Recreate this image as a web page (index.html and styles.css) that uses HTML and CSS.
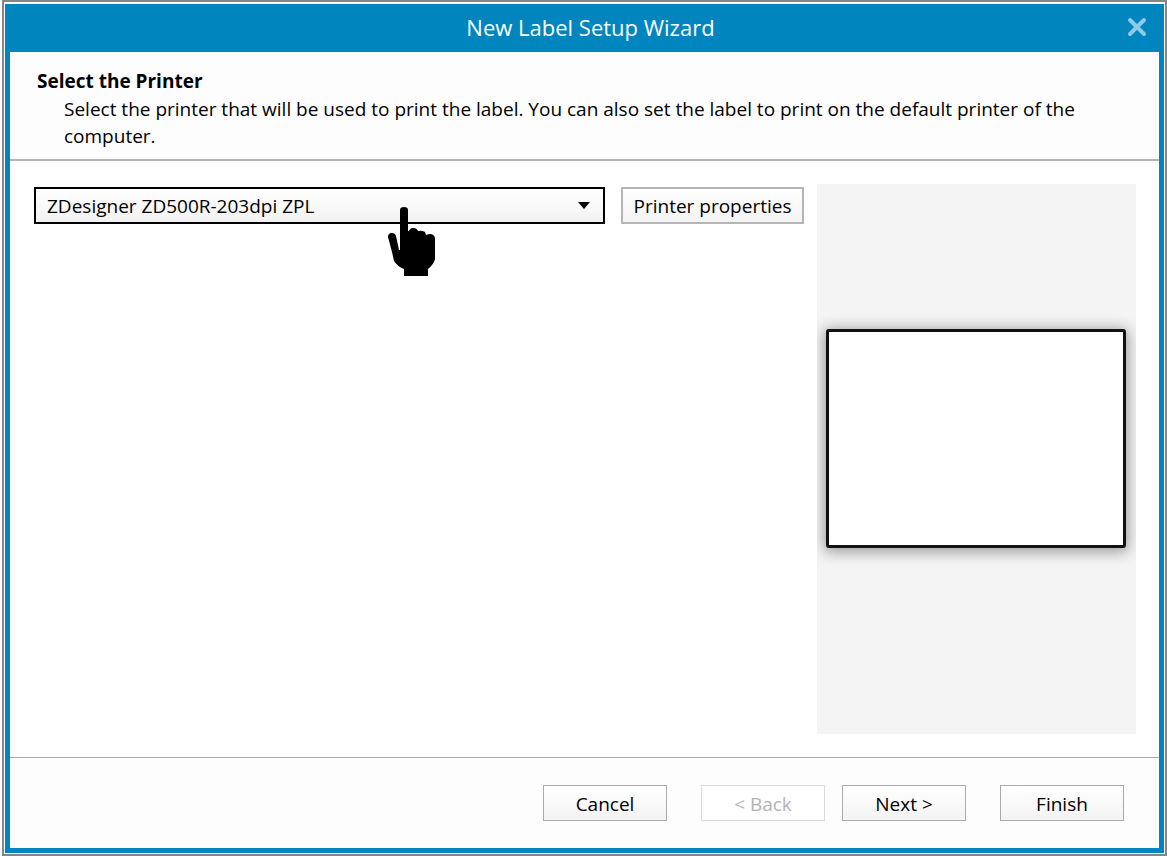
FILE: index.html
```html
<!DOCTYPE html>
<html lang="en">
<head>
<meta charset="utf-8">
<title>New Label Setup Wizard</title>
<link rel="stylesheet" href="styles.css">
</head>
<body>
<div class="frame">
  <main class="window">
    <header class="titlebar">
      <h1 class="titlebar-text">New Label Setup Wizard</h1>
      <button class="close" type="button" aria-label="Close">
        <svg width="20" height="20" viewBox="0 0 20 20" aria-hidden="true"><path d="M3 3L17 17M17 3L3 17" fill="none" stroke="#8ecbe8" stroke-width="4" stroke-linecap="round"/></svg>
      </button>
    </header>
    <div class="content">
      <section class="intro">
        <h2 class="intro-title" id="printer-label">Select the Printer</h2>
        <p class="intro-text">Select the printer that will be used to print the label. You can also set the label to print on the default printer of the computer.</p>
      </section>
      <section class="body">
        <div class="picker">
          <div class="select-wrap">
            <select class="select" aria-labelledby="printer-label">
              <option>ZDesigner ZD500R-203dpi ZPL</option>
            </select>
            <svg class="arrow" width="12" height="7" viewBox="0 0 12 7" aria-hidden="true"><path d="M0 0H12L6 7Z"/></svg>
            <svg class="hand" width="47" height="69" viewBox="0 0 47 69" aria-hidden="true"><path d="M12 3Q12 0 16 0Q20 0 20 3V24H21Q22 21 25 21Q29 21 30 24Q34 23 37 25L38 28Q40 27 43 27Q47 28 47 32V52Q46 57 40 62V69H16V62Q9 59 6 54L4 45L0 30Q0 26 4 26Q7 26 8 29L11 43H12Z"/></svg>
          </div>
          <button class="button button-properties" type="button">Printer properties</button>
        </div>
        <div class="preview"><div class="label-sheet"></div></div>
      </section>
      <footer class="actions">
        <button class="button" type="button">Cancel</button>
        <div class="steps">
          <button class="button" type="button" disabled>&lt; Back</button>
          <button class="button" type="button">Next &gt;</button>
        </div>
        <button class="button" type="button">Finish</button>
      </footer>
    </div>
  </main>
</div>
</body>
</html>
```
FILE: styles.css
```css
* {
  box-sizing: border-box;
}

body {
  margin: 0;
  background: #fff;
  color: #000;
  font: 19px/27px "Open Sans", "Noto Sans", sans-serif;
}

.frame {
  display: flex;
  min-height: 100vh;
  margin-left: 2px;
  padding: 2px;
  background: #858585;
}

.window {
  display: flex;
  flex: 1;
  flex-direction: column;
  padding: 0 5px 5px;
  border: 1px solid #fff;
  border-top-width: 2px;
  background: #0085bf;
}

.titlebar {
  display: grid;
  grid-template-columns: 1fr auto 1fr;
  align-items: center;
  height: 48px;
  padding: 0 12px 3px 24px;
}

.titlebar-text {
  grid-column: 2;
  margin: 0;
  color: #fff;
  font-size: 22px;
  font-weight: 400;
  line-height: 30px;
}

.close {
  display: flex;
  justify-self: end;
  padding: 0;
  border: 0;
  background: none;
}

.content {
  display: flex;
  flex: 1;
  flex-direction: column;
  background: #fff;
}

.intro {
  padding: 16px 80px 9px 27px;
  border-bottom: 2px solid #b5b5b5;
  background: #fdfdfd;
}

.intro-title {
  margin: 0 0 1px;
  font-size: 19px;
  font-weight: 700;
}

.intro-text {
  margin: 0 0 0 27px;
}

.body {
  display: flex;
  flex: 1;
  gap: 13px;
  padding: 23px 23px 23px 24px;
}

.picker {
  display: flex;
  flex: 1;
  align-items: flex-start;
  gap: 16px;
  padding-top: 3px;
}

.select-wrap {
  position: relative;
  flex: 1;
}

.select {
  display: block;
  width: 100%;
  height: 37px;
  padding: 2px 32px 0 11px;
  border: 2px solid #000;
  border-radius: 0;
  appearance: none;
  background: linear-gradient(#fff, #f2f2f2);
  color: #000;
  font: inherit;
}

.arrow {
  position: absolute;
  top: 15px;
  right: 15px;
}

.hand {
  position: absolute;
  top: 20px;
  left: 62%;
}

.button {
  width: 124px;
  height: 36px;
  padding: 2px 0 0;
  border: 1px solid #aaa;
  background: linear-gradient(#fff, #f3f3f3);
  color: #000;
  font: inherit;
}

.button:disabled {
  border-color: #dcdcdc;
  background: #fff;
  color: #b4b4b4;
}

.button-properties {
  width: 183px;
  height: 37px;
  border: 2px solid #b5b5b5;
}

.preview {
  display: flex;
  align-items: center;
  width: 319px;
  padding: 0 10px 0 9px;
  overflow: hidden;
  background: #f4f4f4;
}

.label-sheet {
  width: 100%;
  aspect-ratio: 300 / 219;
  margin-bottom: 42px;
  border: 3px solid #111;
  border-radius: 3px;
  background: #fff;
  box-shadow: 0 2px 14px 2px #999;
}

.actions {
  display: flex;
  justify-content: flex-end;
  gap: 34px;
  padding: 27px 35px;
  border-top: 1px solid #aaa;
  background: #fdfdfd;
}

.steps {
  display: flex;
  gap: 17px;
}
```
